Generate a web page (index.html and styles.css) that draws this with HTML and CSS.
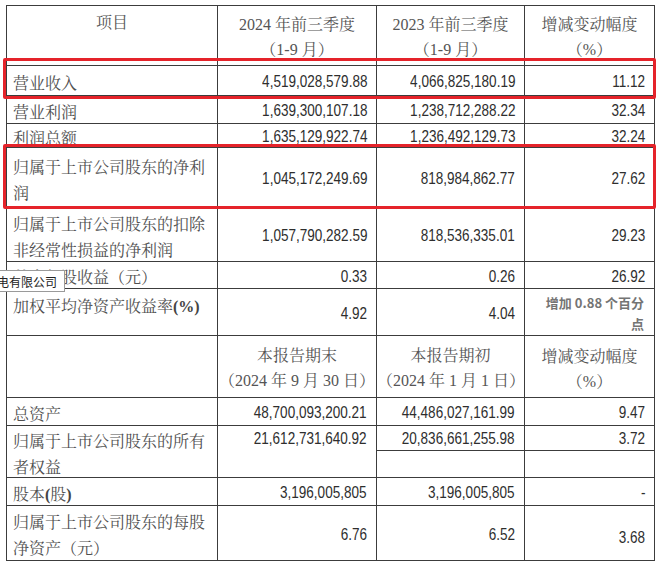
FILE: index.html
```html
<!DOCTYPE html>
<html lang="zh-CN">
<head>
<meta charset="utf-8">
<title>主要会计数据和财务指标</title>
<link rel="stylesheet" href="styles.css">
</head>
<body>
<div class="sheet">
  <div class="grid">
    <div class="c hd hd-item">项目</div>
    <div class="c hd">2024 年前三季度<br>（1-9 月）</div>
    <div class="c hd">2023 年前三季度<br>（1-9 月）</div>
    <div class="c hd">增减变动幅度<br>（%）</div>

    <div class="c lab">营业收入</div>
    <div class="c num"><span>4,519,028,579.88</span></div>
    <div class="c num"><span>4,066,825,180.19</span></div>
    <div class="c num"><span>11.12</span></div>

    <div class="c lab">营业利润</div>
    <div class="c num"><span>1,639,300,107.18</span></div>
    <div class="c num"><span>1,238,712,288.22</span></div>
    <div class="c num"><span>32.34</span></div>

    <div class="c lab">利润总额</div>
    <div class="c num"><span>1,635,129,922.74</span></div>
    <div class="c num"><span>1,236,492,129.73</span></div>
    <div class="c num"><span>32.24</span></div>

    <div class="c lab">归属于上市公司股东的净利润</div>
    <div class="c num"><span>1,045,172,249.69</span></div>
    <div class="c num"><span>818,984,862.77</span></div>
    <div class="c num"><span>27.62</span></div>

    <div class="c lab">归属于上市公司股东的扣除非经常性损益的净利润</div>
    <div class="c num"><span>1,057,790,282.59</span></div>
    <div class="c num"><span>818,536,335.01</span></div>
    <div class="c num"><span>29.23</span></div>

    <div class="c lab">基本每股收益（元）</div>
    <div class="c num"><span>0.33</span></div>
    <div class="c num"><span>0.26</span></div>
    <div class="c num"><span>26.92</span></div>

    <div class="c lab lab-top">加权平均净资产收益率<b>(%)</b></div>
    <div class="c num"><span>4.92</span></div>
    <div class="c num"><span>4.04</span></div>
    <div class="c note">增加 0.88 个百分点</div>

    <div class="c hd"></div>
    <div class="c hd hd2">本报告期末<br>（2024 年 9 月 30 日）</div>
    <div class="c hd hd2">本报告期初<br>（2024 年 1 月 1 日）</div>
    <div class="c hd hd2 hd2-pct">增减变动幅度<br>（%）</div>

    <div class="c lab">总资产</div>
    <div class="c num"><span>48,700,093,200.21</span></div>
    <div class="c num"><span>44,486,027,161.99</span></div>
    <div class="c num"><span>9.47</span></div>

    <div class="c lab">归属于上市公司股东的所有者权益</div>
    <div class="c num num-top"><span>21,612,731,640.92</span></div>
    <div class="c split-cell"><div class="split"><span>20,836,661,255.98</span></div></div>
    <div class="c split-cell"><div class="split"><span>3.72</span></div></div>

    <div class="c lab">股本<b>(</b>股<b>)</b></div>
    <div class="c num"><span>3,196,005,805</span></div>
    <div class="c num"><span>3,196,005,805</span></div>
    <div class="c num"><span>-</span></div>

    <div class="c lab">归属于上市公司股东的每股净资产（元）</div>
    <div class="c num"><span>6.76</span></div>
    <div class="c num"><span>6.52</span></div>
    <div class="c num num-low"><span>3.68</span></div>
  </div>

  <div class="mark mark-revenue"></div>
  <div class="mark mark-profit"></div>
  <div class="tag">电有限公司</div>
</div>
</body>
</html>
```

FILE: styles.css
```css
html, body {
  margin: 0;
  padding: 0;
  background: #ffffff;
}

.sheet {
  position: relative;
  width: 660px;
  height: 567px;
  padding: 5px 0 0 6px;
  box-sizing: border-box;
  overflow: hidden;
}

.grid {
  display: grid;
  grid-template-columns: 211px 159px 148px 130px;
  grid-template-rows: 60px 30px 28px 24px 60px 54px 27px 47px 62px 28px 52px 28px 55px;
  width: max-content;
  border-top: 1px solid #3c3c3c;
  border-left: 1px solid #3c3c3c;
}

.c {
  box-sizing: border-box;
  border-right: 1px solid #3c3c3c;
  border-bottom: 1px solid #3c3c3c;
  min-width: 0;
}

.hd {
  text-align: center;
  padding-top: 6px;
  font-family: "Liberation Serif", "Noto Serif CJK SC", "Noto Sans CJK SC", serif;
  font-size: 16px;
  line-height: 25px;
  color: #555555;
}

.hd-item {
  padding-top: 4px;
}

.hd2 {
  padding-top: 7px;
}

.hd2-pct {
  padding-top: 8px;
}

.lab {
  display: flex;
  align-items: center;
  padding: 6px 6px 0 6px;
  font-family: "Liberation Serif", "Noto Serif CJK SC", "Noto Sans CJK SC", serif;
  font-size: 16px;
  line-height: 26px;
  color: #505050;
}

.lab b {
  font-weight: bold;
  color: #444444;
}

.lab-top {
  align-items: flex-start;
  padding-top: 5px;
}

.num {
  display: flex;
  align-items: center;
  justify-content: flex-end;
  padding: 2px 9px 0 0;
}

.num span,
.split span {
  display: inline-block;
  font-family: "Liberation Sans", Arial, sans-serif;
  font-size: 16.5px;
  line-height: 19px;
  color: #2e2e2e;
  transform: scaleX(0.82);
  transform-origin: 100% 50%;
  white-space: nowrap;
}

.num-top {
  align-items: flex-start;
  padding-top: 3px;
}

.num-low {
  padding-top: 8px;
}

.split-cell {
  padding: 0;
}

.split {
  box-sizing: border-box;
  height: 25px;
  border-bottom: 1px solid #3c3c3c;
  display: flex;
  align-items: center;
  justify-content: flex-end;
  padding-right: 9px;
}

.note {
  display: flex;
  align-items: center;
  text-align: right;
  justify-content: flex-end;
  padding: 1px 10px 0 12px;
  font-family: "Noto Sans CJK SC", "Liberation Sans", sans-serif;
  font-size: 13px;
  font-weight: 700;
  line-height: 21px;
  color: #747474;
}

.mark {
  position: absolute;
  left: 3px;
  width: 653px;
  box-sizing: border-box;
  border: 3px solid #e5232a;
  border-radius: 2px;
}

.mark-revenue {
  top: 58px;
  height: 41px;
}

.mark-profit {
  top: 144px;
  height: 65px;
}

.tag {
  position: absolute;
  left: -1px;
  top: 270px;
  width: 66px;
  height: 22px;
  box-sizing: border-box;
  border: 1px solid #9a9a9a;
  background: #ffffff;
  display: flex;
  align-items: center;
  justify-content: flex-end;
  padding-right: 7px;
  font-family: "Noto Sans CJK SC", sans-serif;
  font-size: 12px;
  color: #222222;
  white-space: nowrap;
  overflow: hidden;
}
```
